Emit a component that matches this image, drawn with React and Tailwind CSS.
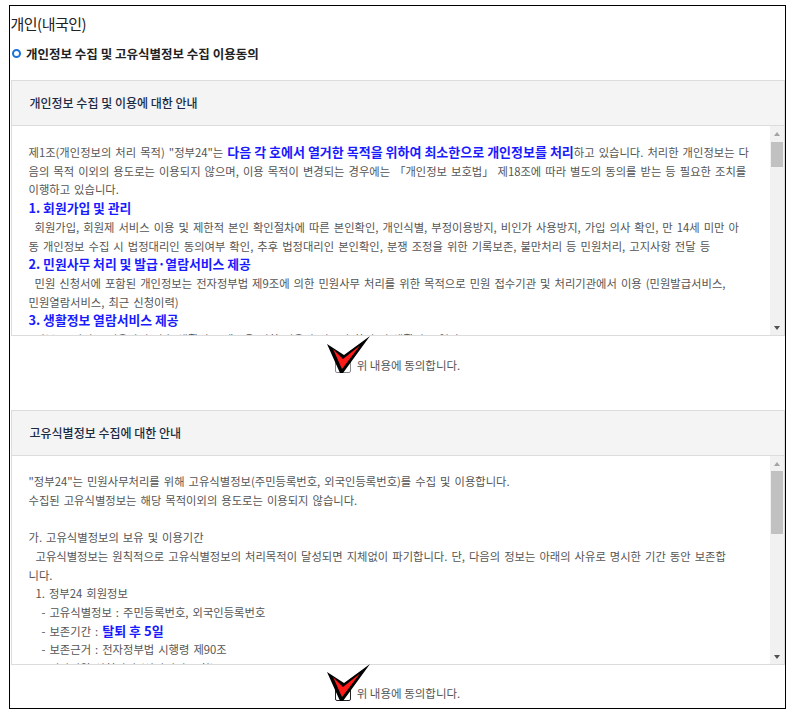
import React from 'react';

function Scrollbar({ thumb }) {
  return (
    <div className="flex w-[14px] shrink-0 flex-col bg-[#f1f1f1]">
      <div className="flex h-[15px] items-center justify-center">
        <div className="h-0 w-0 border-b-[4px] border-l-[3.5px] border-r-[3.5px] border-b-[#a3a3a3] border-l-transparent border-r-transparent" />
      </div>
      <div className={`mx-[1px] bg-[#c1c1c1] ${thumb}`} />
      <div className="flex-1" />
      <div className="flex h-[15px] items-center justify-center">
        <div className="h-0 w-0 border-t-[4px] border-l-[3.5px] border-r-[3.5px] border-t-[#505050] border-l-transparent border-r-transparent" />
      </div>
    </div>
  );
}

function CheckMark() {
  return (
    <svg className="absolute left-[-9px] top-[-22px]" width="44" height="38" viewBox="0 0 44 38">
      <path d="M0 8 L17 19 L43 0 L16 37 L13 37 Z" fill="#000" />
      <path d="M6 13 L16 23 L33 9.5 L15 33 Z" fill="#ff1a1a" />
    </svg>
  );
}

function Agree({ box, pad }) {
  return (
    <div className={`flex items-start justify-center ${pad}`}>
      <div className="flex items-center gap-[6px]">
        <div className={`relative h-[16px] w-[16px] rounded-[2px] bg-white ${box}`}>
          <CheckMark />
        </div>
        <span className="text-[11.5px] leading-[16px] text-[#555]">위 내용에 동의합니다.</span>
      </div>
    </div>
  );
}

function Panel({ title, children, thumb, bodyH, pt }) {
  return (
    <div className="border border-[#dcdcdc]">
      <div className="flex h-[45px] items-center border-b border-[#dcdcdc] bg-[#f4f4f4] px-[18px]">
        <span className="text-[12px] font-medium text-[#1b2b44]">{title}</span>
      </div>
      <div className={`flex bg-white ${bodyH}`}>
        <div className={`flex-1 overflow-hidden pl-[17px] text-[11.3px] leading-[18.7px] text-[#555] [word-spacing:1.5px] ${pt}`}>
          {children}
        </div>
        <Scrollbar thumb={thumb} />
      </div>
    </div>
  );
}

const L = ({ children, className = '' }) => (
  <div className={`whitespace-nowrap ${className}`}>{children}</div>
);
const H = ({ children }) => (
  <div className="whitespace-nowrap text-[12.8px] font-bold text-[#1a1aff] [word-spacing:0px]">{children}</div>
);
const B = ({ children }) => (
  <span className="text-[13px] font-bold text-[#1a1aff] [word-spacing:0px]">{children}</span>
);

export default function App() {
  return (
    <div className="bg-white pb-[3px] pl-[9px] pr-[4px] pt-[5px] font-['Noto_Sans_CJK_KR','Noto_Sans',sans-serif]">
      <div className="h-[704px] overflow-hidden border-[1.5px] border-black px-[0.5px]">
        <div className="pt-[6px] text-[15px] leading-[24px] tracking-[-0.5px] text-[#222]">개인(내국인)</div>
        <div className="mt-[8px] flex items-center gap-[5px] pl-[1.5px] text-[12.5px] font-bold leading-[19px] text-[#222]">
          <span className="inline-block h-[9px] w-[9px] rounded-full border-[2px] border-[#1a73d9]" />
          개인정보 수집 및 고유식별정보 수집 이용동의
        </div>

        <div className="mt-[17px]">
          <Panel title="개인정보 수집 및 이용에 대한 안내" thumb="mt-[1px] h-[25px]" bodyH="h-[209px]" pt="pt-[17px]">
            <L>
              제1조(개인정보의 처리 목적) "정부24"는 <B>다음 각 호에서 열거한 목적을 위하여 최소한으로 개인정보를 처리</B>하고 있습니다. 처리한 개인정보는 다
            </L>
            <L>음의 목적 이외의 용도로는 이용되지 않으며, 이용 목적이 변경되는 경우에는 「개인정보 보호법」 제18조에 따라 별도의 동의를 받는 등 필요한 조치를</L>
            <L>이행하고 있습니다.</L>
            <H>1. 회원가입 및 관리</H>
            <L className="pl-[6px]">회원가입, 회원제 서비스 이용 및 제한적 본인 확인절차에 따른 본인확인, 개인식별, 부정이용방지, 비인가 사용방지, 가입 의사 확인, 만 14세 미만 아</L>
            <L>동 개인정보 수집 시 법정대리인 동의여부 확인, 추후 법정대리인 본인확인, 분쟁 조정을 위한 기록보존, 불만처리 등 민원처리, 고지사항 전달 등</L>
            <H>2. 민원사무 처리 및 발급·열람서비스 제공</H>
            <L className="pl-[6px]">민원 신청서에 포함된 개인정보는 전자정부법 제9조에 의한 민원사무 처리를 위한 목적으로 민원 접수기관 및 처리기관에서 이용 (민원발급서비스,</L>
            <L>민원열람서비스, 최근 신청이력)</L>
            <H>3. 생활정보 열람서비스 제공</H>
            <L className="pl-[6px]">정부24 서비스 이용자의 맞춤 생활정보 제공을 위한 이용자 정보의 확인 및 생활정보 열람</L>
          </Panel>
        </div>

        <Agree box="border border-[#8a8a8a]" pad="h-[74px] pt-[21px]" />

        <Panel title="고유식별정보 수집에 대한 안내" thumb="mt-[0px] h-[63px]" bodyH="h-[208px]" pt="pt-[16px]">
          <L>"정부24"는 민원사무처리를 위해 고유식별정보(주민등록번호, 외국인등록번호)를 수집 및 이용합니다.</L>
          <L>수집된 고유식별정보는 해당 목적이외의 용도로는 이용되지 않습니다.</L>
          <L>&nbsp;</L>
          <L>가. 고유식별정보의 보유 및 이용기간</L>
          <L className="pl-[7px]">고유식별정보는 원칙적으로 고유식별정보의 처리목적이 달성되면 지체없이 파기합니다. 단, 다음의 정보는 아래의 사유로 명시한 기간 동안 보존합</L>
          <L>니다.</L>
          <L className="pl-[7px]">1. 정부24 회원정보</L>
          <L className="pl-[13px]">- 고유식별정보 : 주민등록번호, 외국인등록번호</L>
          <L className="pl-[13px]">- 보존기간 : <B>탈퇴 후 5일</B></L>
          <L className="pl-[13px]">- 보존근거 : 전자정부법 시행령 제90조</L>
          <L className="pl-[7px]">2. 전자민원 신청이력 (상담이력 포함)</L>
        </Panel>

        <Agree box="border-[1.5px] border-[#222]" pad="pt-[20px]" />
      </div>
    </div>
  );
}
